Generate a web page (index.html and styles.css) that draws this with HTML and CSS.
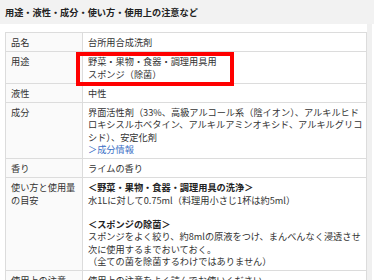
FILE: index.html
```html
<!DOCTYPE html>
<html lang="ja">
<head>
<meta charset="utf-8">
<link rel="stylesheet" href="styles.css">
</head>
<body>
<header class="title">用途・液性・成分・使い方・使用上の注意など</header>
<div class="page">
  <main class="content">
    <table class="spec">
      <tr><th>品名</th><td>台所用合成洗剤</td></tr>
      <tr><th>用途</th><td class="marked"><span class="mark"></span>野菜・果物・食器・調理用具用<br>スポンジ（除菌）</td></tr>
      <tr><th>液性</th><td>中性</td></tr>
      <tr><th>成分</th><td>界面活性剤（33%、高級アルコール系（陰イオン）、アルキルヒド<br>ロキシスルホベタイン、アルキルアミンオキシド、アルキルグリコ<br>シド）、安定化剤<br><a class="link" href="#">＞成分情報</a></td></tr>
      <tr><th>香り</th><td>ライムの香り</td></tr>
      <tr><th>使い方と使用量の目安</th><td><b>＜野菜・果物・食器・調理用具の洗浄＞</b><br>水1Lに対して0.75ml（料理用小さじ1杯は約5ml）<br><br><b>＜スポンジの除菌＞</b><br>スポンジをよく絞り、約8mlの原液をつけ、まんべんなく浸透させ<br>次に使用するまでおいておく。<br>（全ての菌を除菌するわけではありません）</td></tr>
      <tr><th>使用上の注意</th><td>使用上の注意をよく読んでお使いください。</td></tr>
    </table>
  </main>
  <div class="gutter"></div>
</div>
</body>
</html>
```
FILE: styles.css
```css
html, body {
  margin: 0;
  padding: 0;
  background: #fff;
}
body {
  font-family: "Noto Sans CJK JP", "Noto Sans", sans-serif;
  font-size: 9.2px;
  line-height: 12.25px;
  color: #333;
  width: 374px;
  height: 280px;
  overflow: hidden;
}
.title {
  height: 24px;
  box-sizing: border-box;
  padding: 6px 5px 0;
  background: #f2f2f2;
  font-weight: bold;
  color: #222;
}
.page {
  display: flex;
}
.content {
  width: 367px;
  box-sizing: border-box;
  padding: 8px 0 0 5px;
}
.gutter {
  width: 5px;
  margin-right: 2px;
  height: 256px;
  background: #f0f0f0;
}
.spec {
  width: 362px;
  border-collapse: collapse;
  table-layout: fixed;
}
.spec th, .spec td {
  border: 1px solid #dcdcdc;
  padding: 3px 4px 3px 5px;
  text-align: left;
  vertical-align: top;
  font-weight: normal;
  white-space: nowrap;
}
.spec th {
  width: 67px;
  background: #fafafa;
  white-space: normal;
  word-break: break-all;
}
.spec td b {
  font-weight: bold;
  color: #222;
}
.marked {
  position: relative;
}
.mark {
  position: absolute;
  left: -7px;
  top: 0;
  width: 150px;
  height: 26px;
  border: 4px solid #ff0000;
}
.link {
  color: #3b6fc6;
  text-decoration: none;
}
```
